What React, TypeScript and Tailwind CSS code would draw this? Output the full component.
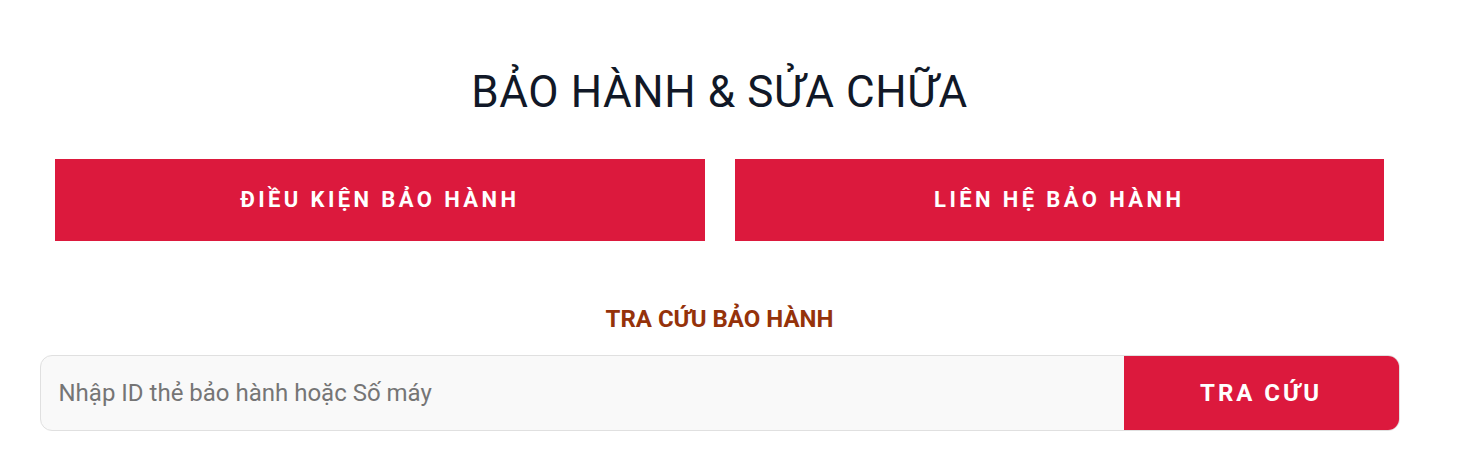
export default function App() {
  return (
    <div className="w-[1480px] h-[472px] bg-white font-['Roboto',sans-serif]">
      <div className="w-[1359px] ml-[40px] pt-[65px] flex flex-col items-center">
        <h1 className="text-[44px] leading-[54px] font-normal text-[#111827] tracking-[0.6px]">
          BẢO HÀNH &amp; SỬA CHỮA
        </h1>

        <div className="mt-[40px] w-full px-[15px] grid grid-cols-2 gap-[30px]">
          <a className="h-[82px] pb-[2px] bg-[#dc193d] flex items-center justify-center text-white font-bold text-[22px] tracking-[3.4px]">
            ĐIỀU KIỆN BẢO HÀNH
          </a>
          <a className="h-[82px] pb-[2px] bg-[#dc193d] flex items-center justify-center text-white font-bold text-[22px] tracking-[3.4px]">
            LIÊN HỆ BẢO HÀNH
          </a>
        </div>

        <h2 className="mt-[64px] text-[24px] leading-[28px] font-bold text-[#95320a]">
          TRA CỨU BẢO HÀNH
        </h2>

        <div className="mt-[22px] w-[1360px] h-[76px] flex rounded-[12px] border border-[#e0e0e0] bg-[#f9f9f9] overflow-hidden">
          <input
            className="flex-1 bg-transparent px-[18px] text-[24px] text-[#333] placeholder:text-[#757575] outline-none"
            placeholder="Nhập ID thẻ bảo hành hoặc Số máy"
          />
          <button className="w-[275px] bg-[#dc193d] text-white font-bold text-[24px] tracking-[3px]">
            TRA CỨU
          </button>
        </div>
      </div>
    </div>
  );
}
